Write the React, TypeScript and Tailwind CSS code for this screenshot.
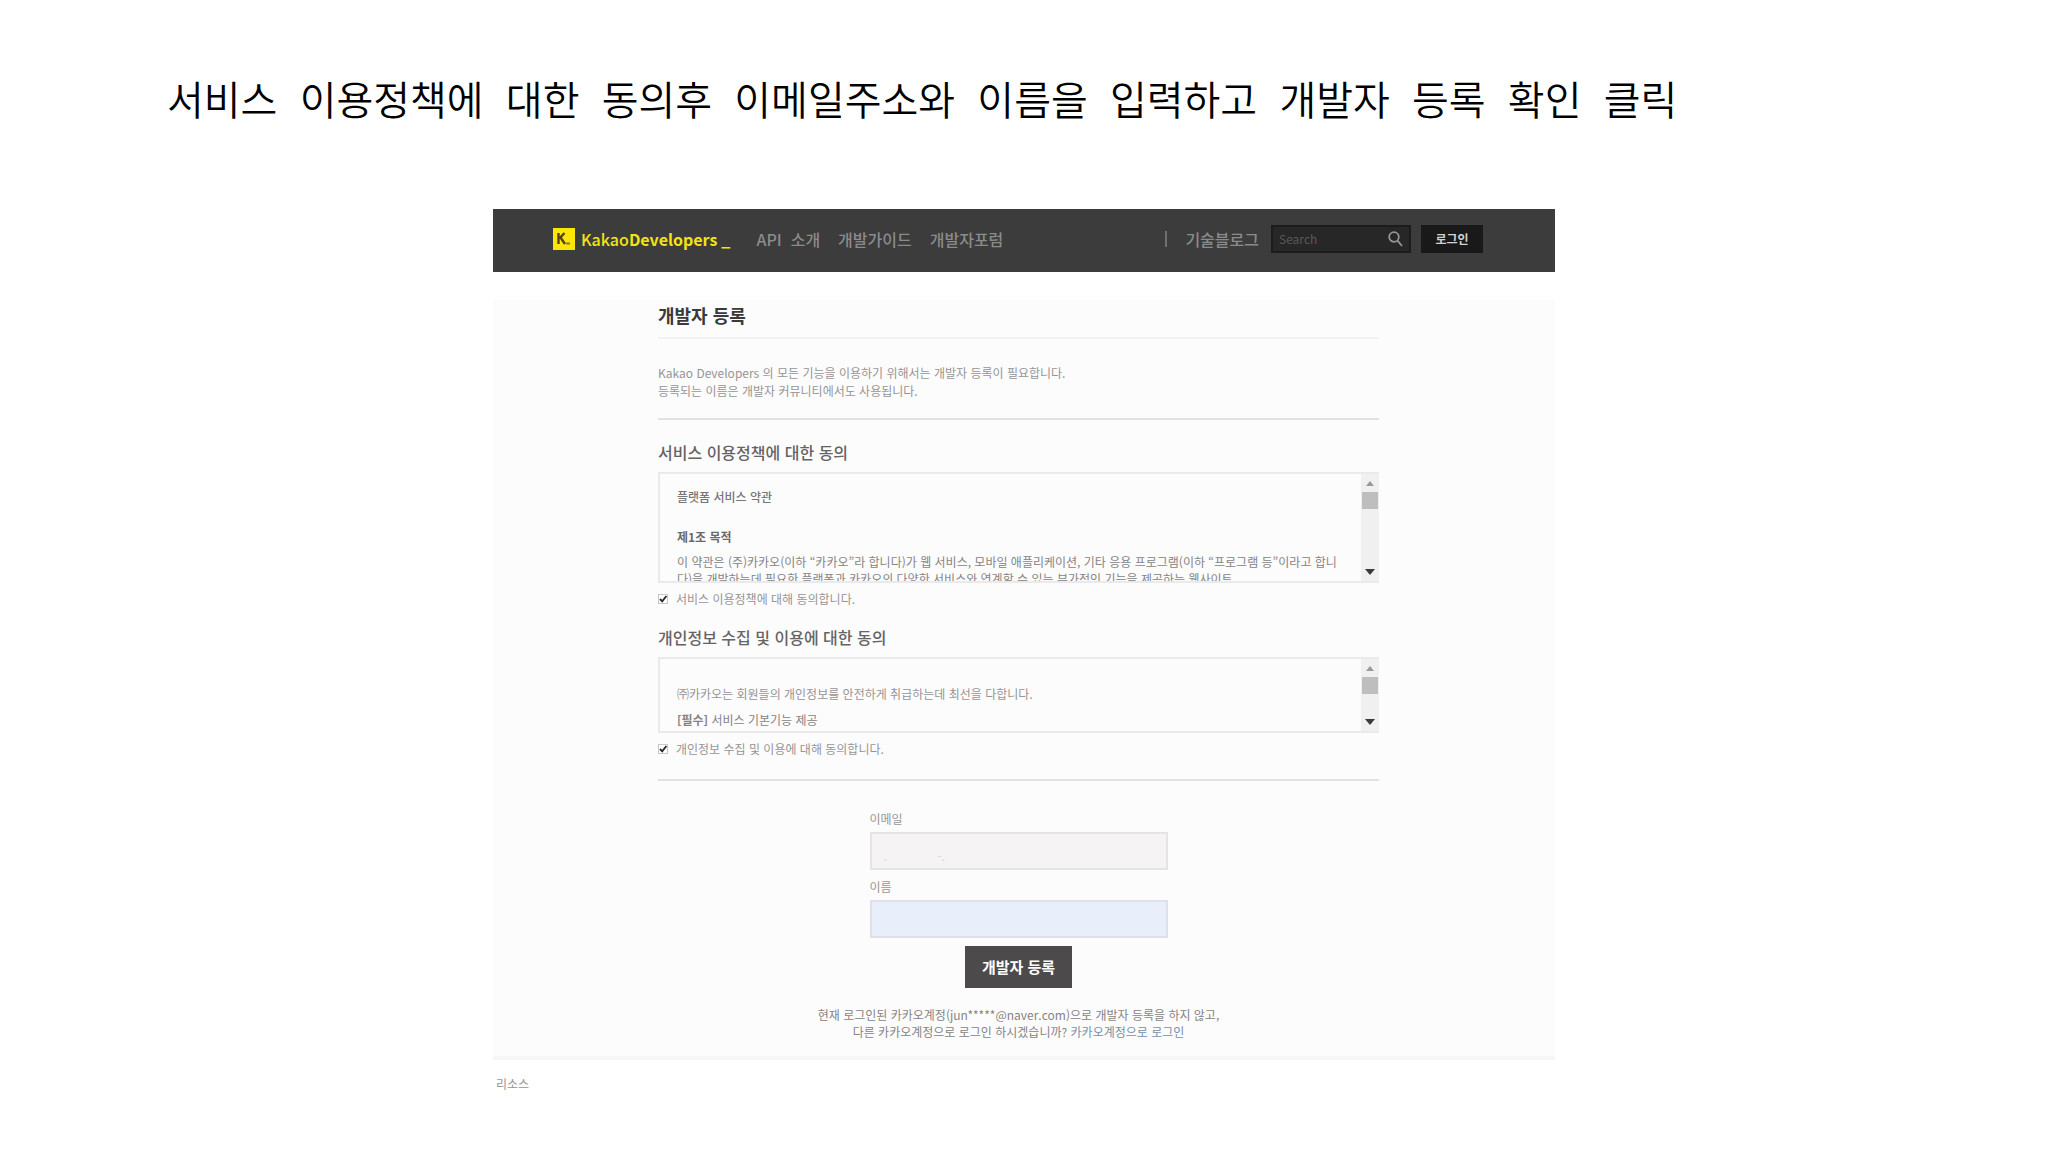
import { useState } from 'react';
import type { ReactNode } from 'react';

const navLinks = ['개발가이드', '개발자포럼'];

const Logo = () => (
  <a href="#" className="flex items-center text-[#f3e313]">
    <svg viewBox="0 0 22 22" className="h-[22px] w-[22px]" aria-hidden="true">
      <rect width="22" height="22" fill="#fbe605" />
      <path d="M5.5 5v11M11.5 5L6.5 10.4M7.5 9.5L12 16" fill="none" stroke="#54401a" strokeWidth="2.4" />
      <path d="M13 15.5h4" stroke="#8d7a20" strokeWidth="2" />
    </svg>
    <span className="ml-1.5 text-base leading-6">
      Kakao<b className="font-bold">Developers</b>
      <span className="ml-1 font-bold">_</span>
    </span>
  </a>
);

const Header = () => (
  <header className="flex h-[63px] items-center bg-[#3c3c3c] pr-[72px] pb-1 pl-[60px] text-base font-medium text-[#8b8b8b]">
    <Logo />
    <nav className="ml-[26px] flex gap-[18px]">
      <a href="#" className="whitespace-pre">API  소개</a>
      {navLinks.map((link) => (
        <a key={link} href="#">
          {link}
        </a>
      ))}
    </nav>
    <div className="ml-auto flex items-center">
      <span className="mr-[18px] h-4 w-0.5 bg-[#6f6f6f]" />
      <a href="#">기술블로그</a>
      <form className="ml-3 flex h-7 w-[140px] items-center border-2 border-[#1c1c1c] bg-[#272727] px-1.5">
        <input
          type="search"
          aria-label="Search"
          placeholder="Search"
          className="w-full min-w-0 bg-transparent text-xs font-normal placeholder:text-[#595959]"
        />
        <button type="button" aria-label="검색" className="text-[#969696]">
          <svg viewBox="0 0 16 16" className="h-4 w-4" fill="none" stroke="currentColor" strokeWidth="1.8">
            <circle cx="7" cy="6" r="4.8" />
            <path d="M10.5 9.7L15 15" />
          </svg>
        </button>
      </form>
      <button type="button" className="ml-2.5 h-7 w-[62px] bg-[#191919] text-xs font-bold text-[#d2d2d2]">
        로그인
      </button>
    </div>
  </header>
);

const TermsBox = ({ className, children }: { className: string; children: ReactNode }) => (
  <div className={`flex overflow-hidden border-2 border-r-0 border-[#ebe9ea] ${className}`}>
    <div className="min-w-0 flex-1 overflow-hidden pr-5 pl-[17px]">{children}</div>
    <div className="flex w-[18px] flex-col items-center bg-[#f1f0f1]">
      <svg viewBox="0 0 10 6" className="mt-1.5 h-1.5 w-2.5">
        <path d="M1 6L5 1l4 5z" fill="#9b9a9b" />
      </svg>
      <div className="mt-1.5 h-[17px] w-4 bg-[#bfbebf]" />
      <svg viewBox="0 0 10 6" className="mt-auto mb-1.5 h-1.5 w-2.5">
        <path d="M0 0L5 6l5-6z" fill="#3c3b3c" />
      </svg>
    </div>
  </div>
);

const AgreeCheckbox = ({ label }: { label: string }) => {
  const [checked, setChecked] = useState(true);

  return (
    <label className="mt-1.5 flex items-center gap-2 leading-5">
      <span className="grid">
        <input
          type="checkbox"
          checked={checked}
          onChange={() => setChecked(!checked)}
          className="col-start-1 row-start-1 h-2.5 w-2.5 appearance-none border border-[#c9c8c9] bg-white"
        />
        {checked && (
          <svg viewBox="0 0 10 10" className="pointer-events-none col-start-1 row-start-1 h-2.5 w-2.5">
            <path d="M2 5l2.2 2.4L8.4 2" fill="none" stroke="#2b2b2b" strokeWidth="1.9" />
          </svg>
        )}
      </span>
      {label}
    </label>
  );
};

const App = () => {
  const [email, setEmail] = useState('.\u00a0\u00a0\u00a0\u00a0\u00a0\u00a0\u00a0\u00a0\u00a0\u00a0\u00a0\u00a0\u00a0\u00a0\u00a0-.');
  const [name, setName] = useState('');

  return (
    <div lang="ko" className="min-h-screen bg-white px-4 pb-12 font-['Noto_Sans_CJK_KR',sans-serif]">
      <h1 className="ml-[151px] pt-[71px] font-['Liberation_Sans','Noto_Sans_CJK_KR',sans-serif] text-[40px] leading-[60px] font-[350] whitespace-pre-wrap text-black">
        서비스  이용정책에  대한  동의후  이메일주소와  이름을  입력하고  개발자  등록  확인  클릭
      </h1>

      <div className="mx-auto mt-[78px] max-w-[1062px] text-xs text-[#969495]">
        <Header />

        <main className="mt-7 border-b-4 border-[#f7f5f6] bg-[#fdfcfd] pr-44 pb-4 pl-[165px]">
          <h2 className="border-b-2 border-[#f3f1f2] pt-px pb-2 text-lg leading-7 font-bold text-[#3b393a]">개발자 등록</h2>
          <p className="border-b-2 border-[#e3e1e2] pt-[25px] pb-[18px] leading-[18px]">
            Kakao Developers 의 모든 기능을 이용하기 위해서는 개발자 등록이 필요합니다.
            <br />
            등록되는 이름은 개발자 커뮤니티에서도 사용됩니다.
          </p>

          <section className="mt-5">
            <h3 className="mb-2 text-base leading-6 font-medium text-[#656364]">서비스 이용정책에 대한 동의</h3>
            <TermsBox className="h-[111px]">
              <p className="mt-[14px] leading-[18px] font-medium text-[#777576]">플랫폼 서비스 약관</p>
              <p className="mt-[22px] leading-[18px] font-bold text-[#6b696a]">제1조 목적</p>
              <p className="mt-[7px] leading-[17px] break-all text-[#858384]">
                이 약관은 (주)카카오(이하 “카카오”라 합니다)가 웹 서비스, 모바일 애플리케이션, 기타 응용 프로그램(이하 “프로그램 등”이라고 합니다)을
                개발하는데 필요한 플랫폼과 카카오의 다양한 서비스와 연계할 수 있는 부가적인 기능을 제공하는 웹사이트
              </p>
            </TermsBox>
            <AgreeCheckbox label="서비스 이용정책에 대해 동의합니다." />
          </section>

          <section className="mt-4 border-b-2 border-[#e3e1e2] pb-5">
            <h3 className="mb-2 text-base leading-6 font-medium text-[#656364]">개인정보 수집 및 이용에 대한 동의</h3>
            <TermsBox className="h-[76px]">
              <p className="mt-[26px] leading-[18px]">㈜카카오는 회원들의 개인정보를 안전하게 취급하는데 최선을 다합니다.</p>
              <p className="mt-2 leading-[18px] text-[#858384]">
                <b className="font-bold">[필수]</b> 서비스 기본기능 제공
              </p>
            </TermsBox>
            <AgreeCheckbox label="개인정보 수집 및 이용에 대해 동의합니다." />
          </section>

          <form className="mx-auto mt-7 flex max-w-[298px] flex-col">
            <label htmlFor="email" className="mb-[3px] leading-5">
              이메일
            </label>
            <input
              id="email"
              value={email}
              onChange={(e) => setEmail(e.target.value)}
              className="h-[38px] border-2 border-[#e6e3e4] bg-[#f5f3f4] px-3 pt-2 text-[#d9d6d7]"
            />
            <label htmlFor="name" className="mt-[7px] mb-[3px] leading-5">
              이름
            </label>
            <input
              id="name"
              value={name}
              onChange={(e) => setName(e.target.value)}
              className="h-[38px] border-2 border-[#dfe1ea] bg-[#e9eefb] px-3 text-[#656364]"
            />
            <button type="button" className="mt-2 h-[42px] w-[107px] self-center bg-[#4c4a4b] text-[15px] font-bold text-white">
              개발자 등록
            </button>
          </form>

          <p className="mt-[18px] text-center leading-[17px] text-[#858384]">
            현재 로그인된 카카오계정(jun*****@naver.com)으로 개발자 등록을 하지 않고,
            <br />
            다른 카카오계정으로 로그인 하시겠습니까?{' '}
            <a href="#" className="text-[#7590a6]">
              카카오계정으로 로그인
            </a>
          </p>
        </main>

        <footer className="mt-[14px] pl-[3px] leading-5">리소스</footer>
      </div>
    </div>
  );
};

export default App;
